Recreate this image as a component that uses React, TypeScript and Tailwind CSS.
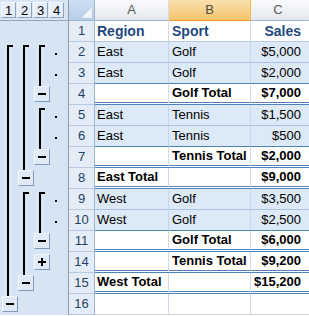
import React from 'react'

type Kind = 'head' | 'data' | 'total' | 'blank'
type Btn = { level: 1 | 2 | 3; sign: '-' | '+' }
type Row = { n: number; a: string; b: string; c: string; kind: Kind; btn?: Btn }

const rows: Row[] = [
  { n: 1, a: 'Region', b: 'Sport', c: 'Sales', kind: 'head' },
  { n: 2, a: 'East', b: 'Golf', c: '$5,000', kind: 'data' },
  { n: 3, a: 'East', b: 'Golf', c: '$2,000', kind: 'data' },
  { n: 4, a: '', b: 'Golf Total', c: '$7,000', kind: 'total', btn: { level: 3, sign: '-' } },
  { n: 5, a: 'East', b: 'Tennis', c: '$1,500', kind: 'data' },
  { n: 6, a: 'East', b: 'Tennis', c: '$500', kind: 'data' },
  { n: 7, a: '', b: 'Tennis Total', c: '$2,000', kind: 'total', btn: { level: 3, sign: '-' } },
  { n: 8, a: 'East Total', b: '', c: '$9,000', kind: 'total', btn: { level: 2, sign: '-' } },
  { n: 9, a: 'West', b: 'Golf', c: '$3,500', kind: 'data' },
  { n: 10, a: 'West', b: 'Golf', c: '$2,500', kind: 'data' },
  { n: 11, a: '', b: 'Golf Total', c: '$6,000', kind: 'total', btn: { level: 3, sign: '-' } },
  { n: 14, a: '', b: 'Tennis Total', c: '$9,200', kind: 'total', btn: { level: 3, sign: '+' } },
  { n: 15, a: 'West Total', b: '', c: '$15,200', kind: 'total', btn: { level: 2, sign: '-' } },
  { n: 16, a: '', b: '', c: '', kind: 'blank', btn: { level: 1, sign: '-' } },
]

// outline bars: [x, y, height]
const bars: [number, number, number][] = [
  [7, 45, 251],
  [23, 45, 125],
  [23, 192, 83],
  [39, 45, 41],
  [39, 108, 41],
  [39, 192, 41],
]

function OutlineButton({ sign }: { sign: '-' | '+' }) {
  return (
    <div className="relative flex h-4 w-4 items-center justify-center border border-t-[#f3f7fc] border-l-[#f3f7fc] border-b-[#7d9abd] border-r-[#7d9abd] bg-[#e0eaf6]">
      <div className="h-[2px] w-2 bg-black" />
      {sign === '+' && <div className="absolute h-2 w-[2px] bg-black" />}
    </div>
  )
}

function rowBorder(r: Row, next?: Row) {
  if (r.kind === 'total') return 'border-b-[3px] border-double border-b-[#4f81bd]'
  if (next?.kind === 'total') return 'border-b border-b-[#4f81bd]'
  if (r.kind === 'data') return 'border-b border-b-[#a9c2e1]'
  if (r.kind === 'head') return 'border-b border-b-[#b9cbe3]'
  return 'border-b border-b-[#d0d7e5]'
}

export default function App() {
  return (
    <div className="relative h-[316px] w-[309px] overflow-hidden bg-white font-['Liberation_Sans',Arial,sans-serif] text-[13px] text-black">
      {/* column header row */}
      <div className="flex h-[21px]">
        <div className="flex h-[21px] w-[69px] gap-px border-r border-b border-r-[#9a9a9a] border-b-[#95a6bb] bg-[#d6e4f3] pl-px pt-[2px]">
          {[1, 2, 3, 4].map((l) => (
            <div
              key={l}
              className="flex h-[16px] w-[15px] items-center justify-center border border-t-[#f5f8fc] border-l-[#f5f8fc] border-b-[#8aa2c0] border-r-[#8aa2c0] bg-[#e6eef8] text-[13px] leading-none"
            >
              {l}
            </div>
          ))}
        </div>
        <div className="relative h-[21px] w-[26px] border-r border-b border-r-[#9eb6ce] border-b-[#9eb6ce] bg-linear-to-b from-[#cfdff3] to-[#b6cdea]">
          <svg className="absolute top-[7px] left-[12px]" width="11" height="11" viewBox="0 0 11 11">
            <polygon points="11,0 11,11 0,11" fill="#f4f6f9" />
            <polygon points="11,0 11,11 0,11" fill="none" stroke="#c9cfd8" strokeWidth="0.6" />
          </svg>
        </div>
        <div className="flex h-[21px] w-[74px] items-center justify-center border-r border-b border-r-[#d5dbe4] border-b-[#9eb6ce] bg-linear-to-b from-[#fafbfd] to-[#e4e8ee] text-[#5b5b5b]">
          A
        </div>
        <div className="flex h-[21px] w-[82px] items-center justify-center border-r border-b border-r-[#f2b55a] border-b-[#f29536] bg-linear-to-b from-[#fae0ad] to-[#f3c56a] text-[#4a4a4a]">
          B
        </div>
        <div className="flex h-[21px] w-[58px] items-center justify-center border-b border-b-[#9eb6ce] bg-linear-to-b from-[#fafbfd] to-[#e4e8ee] pr-[4px] text-[#5b5b5b]">
          C
        </div>
      </div>

      {rows.map((r, i) => {
        const next = rows[i + 1]
        const fill = r.kind === 'data' ? 'bg-[#dce9f6]' : 'bg-white'
        const vline = r.kind === 'data' ? 'border-r-[#c6d7ed]' : 'border-r-[#d4dbe8]'
        const text =
          r.kind === 'head'
            ? 'text-[14px] font-bold text-[#1f497d]'
            : r.kind === 'total'
              ? 'font-bold'
              : ''
        const cell = `flex h-[21px] items-center whitespace-nowrap ${fill} ${rowBorder(r, next)} ${text}`
        return (
          <div key={r.n} className="flex h-[21px]">
            <div className="flex h-[21px] w-[69px] border-r border-r-[#9a9a9a] bg-[#d6e4f3] pl-[2px] pt-[2px]">
              {[1, 2, 3].map((l) => (
                <div key={l} className="w-4">
                  {r.btn && r.btn.level === l && <OutlineButton sign={r.btn.sign} />}
                </div>
              ))}
              <div className="w-4 pt-[9px] pl-[5px]">
                {r.kind === 'data' && <div className="h-[2px] w-[2px] bg-black" />}
              </div>
            </div>
            <div className="flex h-[21px] w-[26px] items-center justify-center border-r border-b border-r-[#9eb6ce] border-b-[#b7cae2] bg-[#e4ecf7] text-[#243f60]">
              {r.n}
            </div>
            <div className={`${cell} w-[74px] border-r ${vline} pl-[2px]`}>{r.a}</div>
            <div className={`${cell} w-[82px] border-r ${vline} pl-[3px]`}>{r.b}</div>
            <div className={`${cell} w-[58px] justify-end pr-[8px]`}>{r.c}</div>
          </div>
        )
      })}

      {/* outline bars */}
      <svg className="pointer-events-none absolute top-0 left-0" width="68" height="316">
        {bars.map(([x, y, h], k) => (
          <g key={k} fill="#000">
            <rect x={x} y={y} width="2" height={h} />
            <rect x={x} y={y} width="6" height="2" />
          </g>
        ))}
      </svg>
    </div>
  )
}
